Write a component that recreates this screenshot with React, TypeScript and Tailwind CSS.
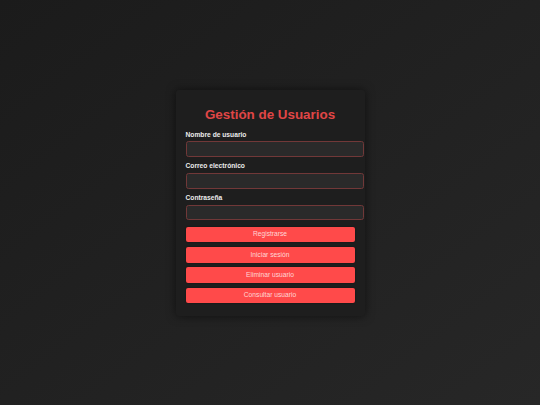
import React from 'react';

const fields = [
  { id: 'username', label: 'Nombre de usuario', type: 'text' },
  { id: 'email', label: 'Correo electrónico', type: 'email' },
  { id: 'password', label: 'Contraseña', type: 'password' },
];

const actions = ['Registrarse', 'Iniciar sesión', 'Eliminar usuario', 'Consultar usuario'];

const App: React.FC = () => {
  return (
    <div className="min-h-screen w-full bg-gradient-to-br from-[#1b1b1b] via-[#212121] to-[#272727] flex items-center justify-center font-['Liberation_Sans',Arial,sans-serif]">
      {/* Card */}
      <div className="w-[189px] h-[226px] bg-[#1e1e1e] rounded-[3px] shadow-[0_0_10px_rgba(0,0,0,0.55)] px-[10px] pt-[17.5px]">
        <h1 className="text-[13.4px] leading-[15px] font-bold text-[#e04646] text-center">Gestión de Usuarios</h1>

        <form className="mt-[8.5px]" onSubmit={(e) => e.preventDefault()}>
          {fields.map((f, i) => (
            <div key={f.id} className={i > 0 ? 'mt-[5.5px]' : ''}>
              <label htmlFor={f.id} className="block text-[6.7px] leading-[8px] font-bold text-[#ececec]">
                {f.label}
              </label>
              <input
                id={f.id}
                type={f.type}
                className="block mt-[2.6px] w-[178px] h-[15.7px] bg-[#2a2a2a] border border-[#713838] rounded-[2.5px] outline-none"
              />
            </div>
          ))}

          <div className="mt-[6.3px] flex flex-col gap-[4.7px]">
            {actions.map((a) => (
              <button
                key={a}
                type="button"
                className="w-full h-[15.7px] bg-[#ff4a4a] rounded-[2px] text-[6.7px] leading-none text-[#ffd6d6] shadow-[0_0_2px_rgba(0,0,0,0.4)]"
              >
                {a}
              </button>
            ))}
          </div>
        </form>
      </div>
    </div>
  );
};

export default App;
